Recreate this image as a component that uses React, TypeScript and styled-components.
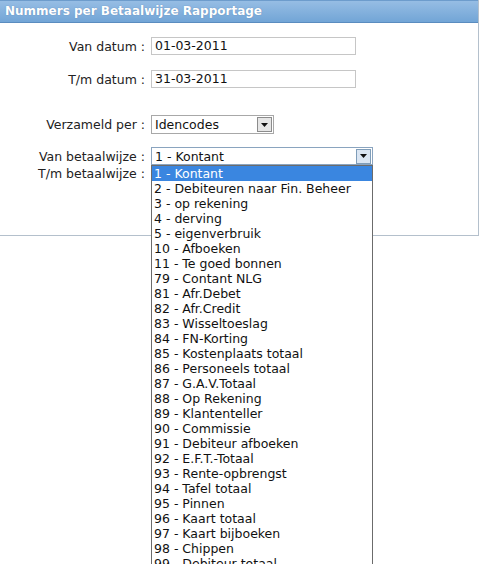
import React from "react";
import styled, { createGlobalStyle } from "styled-components";

const GlobalStyle = createGlobalStyle`
  html, body {
    margin: 0;
    padding: 0;
    background: #ffffff;
    overflow: hidden;
    height: 564px;
  }
  body {
    font-family: "DejaVu Sans", Verdana, sans-serif;
    font-size: 12.5px;
    color: #222;
  }
`;

const items = [
  "1 - Kontant",
  "2 - Debiteuren naar Fin. Beheer",
  "3 - op rekening",
  "4 - derving",
  "5 - eigenverbruik",
  "10 - Afboeken",
  "11 - Te goed bonnen",
  "79 - Contant NLG",
  "81 - Afr.Debet",
  "82 - Afr.Credit",
  "83 - Wisseltoeslag",
  "84 - FN-Korting",
  "85 - Kostenplaats totaal",
  "86 - Personeels totaal",
  "87 - G.A.V.Totaal",
  "88 - Op Rekening",
  "89 - Klantenteller",
  "90 - Commissie",
  "91 - Debiteur afboeken",
  "92 - E.F.T.-Totaal",
  "93 - Rente-opbrengst",
  "94 - Tafel totaal",
  "95 - Pinnen",
  "96 - Kaart totaal",
  "97 - Kaart bijboeken",
  "98 - Chippen",
  "99 - Debiteur totaal",
];

const Arrow = () => (
  <svg width="7" height="4" viewBox="0 0 7 4">
    <path d="M0 0 H7 L3.5 4 Z" fill="#111" />
  </svg>
);

const App: React.FC = () => {
  return (
    <>
      <GlobalStyle />
      <Panel>
        <Header>Nummers per Betaalwijze Rapportage</Header>
        <Body>
          <Row mb={15}>
            <Label>Van datum :</Label>
            <TextInput w={205}>01-03-2011</TextInput>
          </Row>
          <Row mb={27}>
            <Label>T/m datum :</Label>
            <TextInput w={205}>31-03-2011</TextInput>
          </Row>
          <Row mb={13}>
            <Label>Verzameld per :</Label>
            <Select w={123} h={19}>
              <SelectText>Idencodes</SelectText>
              <ArrowBox>
                <Arrow />
              </ArrowBox>
            </Select>
          </Row>
          <Row mb={0}>
            <Label>Van betaalwijze :</Label>
            <Field>
              <Select w={222} h={18} open>
                <SelectText>1 - Kontant</SelectText>
                <ArrowBox open>
                  <Arrow />
                </ArrowBox>
              </Select>
              <List>
                {items.map((it, i) => (
                  <Option key={it} active={i === 0}>
                    {it}
                  </Option>
                ))}
              </List>
            </Field>
          </Row>
          <Row mb={0}>
            <Label>T/m betaalwijze :</Label>
          </Row>
        </Body>
      </Panel>
    </>
  );
};

export default App;

const Panel = styled.div`
  width: 479px;
  box-sizing: border-box;
  border-right: 1px solid #b4c0cc;
  border-bottom: 1px solid #b4c0cc;
  background: #fff;
`;

const Header = styled.div`
  height: 23px;
  box-sizing: border-box;
  border-top: 1px solid #6d9ccc;
  border-bottom: 1px solid #5a8cbf;
  background: linear-gradient(#96bde4, #72a5d6);
  color: #fff;
  font-weight: bold;
  font-size: 12px;
  line-height: 20px;
  padding-left: 5px;
  text-shadow: 0 0 1px rgba(40, 80, 130, 0.5);
`;

const Body = styled.div`
  padding: 14px 0 54px 0;
`;

const Row = styled.div<{ mb: number }>`
  display: flex;
  align-items: center;
  margin-bottom: ${(p) => p.mb}px;
  min-height: 16px;
`;

const Label = styled.div`
  width: 145px;
  text-align: right;
  padding-right: 6px;
  white-space: nowrap;
  color: #222;
`;

const Field = styled.div`
  position: relative;
`;

const TextInput = styled.div<{ w: number }>`
  width: ${(p) => p.w}px;
  height: 18px;
  box-sizing: border-box;
  border: 1px solid #c6c6c6;
  padding-left: 3px;
  line-height: 16px;
  color: #111;
`;

const Select = styled.div<{ w: number; h: number; open?: boolean }>`
  width: ${(p) => p.w}px;
  height: ${(p) => p.h}px;
  box-sizing: border-box;
  border: 1px solid ${(p) => (p.open ? "#8aa4bf" : "#a8a8a8")};
  display: flex;
  align-items: center;
  justify-content: space-between;
  padding: 0 1px 0 3px;
  background: #fff;
`;

const SelectText = styled.span`
  color: #111;
`;

const ArrowBox = styled.div<{ open?: boolean }>`
  width: 15px;
  height: 15px;
  box-sizing: border-box;
  border: 1px solid ${(p) => (p.open ? "#7f9db9" : "#8c8c8c")};
  background: ${(p) => (p.open ? "#dbe6f3" : "#e6e6e6")};
  display: flex;
  align-items: center;
  justify-content: center;
`;

const List = styled.div`
  position: absolute;
  top: 100%;
  left: 0;
  width: 222px;
  box-sizing: border-box;
  border: 1px solid #6b6b6b;
  background: #fff;
  z-index: 5;
`;

const Option = styled.div<{ active?: boolean }>`
  height: 15px;
  line-height: 15px;
  padding-left: 2px;
  white-space: nowrap;
  background: ${(p) => (p.active ? "#3a86e0" : "#fff")};
  color: ${(p) => (p.active ? "#fff" : "#111")};
`;
